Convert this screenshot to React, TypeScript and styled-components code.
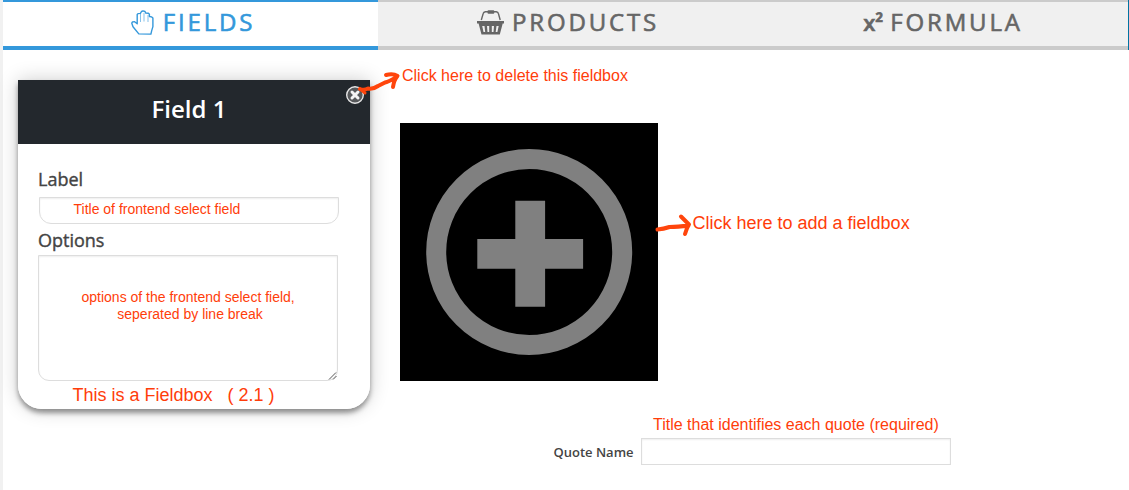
import React from 'react';
import styled, { createGlobalStyle } from 'styled-components';

const GlobalStyle = createGlobalStyle`
  * { box-sizing: border-box; }
  html, body { margin: 0; background: #fff; }
  body { font-family: 'Open Sans', sans-serif; color: #444; overflow: hidden; }
`;

const Page = styled.div`
  position: relative;
  width: 1129px;
  height: 490px;
  border-left: 3px solid #f1f1f1;
  background: #fff;
  display: flex;
  flex-direction: column;
`;

const TabBar = styled.nav`
  display: flex;
  height: 50px;
  border-right: 1px solid #0074a2;
`;

const Tab = styled.div<{ $active?: boolean }>`
  width: 375px;
  display: flex;
  justify-content: center;
  padding-left: 5px;
  border-top: 2px solid ${p => (p.$active ? '#3498db' : '#cbcbcb')};
  border-bottom: 4px solid ${p => (p.$active ? '#3498db' : '#cbcbcb')};
  background: ${p => (p.$active ? '#fff' : '#f0f0f0')};
  color: ${p => (p.$active ? '#3498db' : '#666')};
  font-size: 24px;
  line-height: 40px;
  letter-spacing: 2.85px;
  -webkit-text-stroke: 0.6px currentColor;
`;

const TabIcon = styled.svg`
  display: block;
  flex: none;
  margin-top: 8px;
  margin-right: 8px;
  overflow: visible;
`;

const Power = styled.span`
  font-size: 22px;
  font-weight: 600;
  letter-spacing: 0;
  margin-right: 7px;
`;

const Main = styled.main`
  display: flex;
  align-items: flex-start;
  padding: 30px 0 0 15px;
`;

const FieldBox = styled.section`
  width: 352px;
  height: 329px;
  border-radius: 0 0 24px 24px;
  overflow: hidden;
  background: #fff;
`;

const Shadow = styled.div`
  border-radius: 0 0 24px 24px;
  box-shadow: 0 4px 5px rgba(0, 0, 0, 0.38), 0 0 20px rgba(0, 0, 0, 0.2);
`;

const FieldHeader = styled.header`
  position: relative;
  height: 64px;
  background: #23282d;
  color: #fff;
  text-align: center;
  font-size: 24px;
  font-weight: 600;
  line-height: 57px;
  padding-right: 10px;
`;

const CloseIcon = styled.svg`
  position: absolute;
  right: 5px;
  top: 5px;
`;

const FieldBody = styled.div`
  display: flex;
  flex-direction: column;
  padding: 22px 20px 0;
`;

const FieldLabel = styled.label`
  font-size: 18px;
  line-height: 26px;
  -webkit-text-stroke: 0.4px currentColor;
`;

const TextInput = styled.input`
  width: 300px;
  height: 27px;
  margin: 5px 0 3px 1px;
  border: 1px solid #ddd;
  border-radius: 0 0 12px 12px;
  box-shadow: inset 0 1px 2px rgba(0, 0, 0, 0.07);
  outline: none;
`;

const OptionsArea = styled.textarea`
  width: 300px;
  height: 126px;
  margin: 2px 0 0;
  border: 1px solid #ddd;
  border-radius: 0 0 11px 11px;
  box-shadow: inset 0 1px 2px rgba(0, 0, 0, 0.07);
  resize: none;
  outline: none;
`;

const AddBox = styled.button`
  width: 258px;
  height: 258px;
  margin: 43px 0 0 30px;
  padding: 0;
  border: 0;
  background: #000;
`;

const QuoteRow = styled.div`
  display: flex;
  align-items: center;
  margin: 29px 0 0 550.5px;
`;

const QuoteLabel = styled.label`
  width: 87.5px;
  font-size: 13px;
  font-weight: 600;
  line-height: 18px;
`;

const QuoteInput = styled.input`
  width: 310px;
  height: 27px;
  border: 1px solid #ddd;
  box-shadow: inset 0 1px 2px rgba(0, 0, 0, 0.07);
  outline: none;
`;

const Note = styled.span<{ $x: number; $y: number; $size: number }>`
  position: absolute;
  left: ${p => p.$x - 3}px;
  top: ${p => p.$y}px;
  font-family: 'Liberation Sans', Arial, sans-serif;
  font-size: ${p => p.$size}px;
  line-height: 17px;
  color: #ff3d0a;
  white-space: pre;
  text-align: center;
`;

const Pen = styled.svg<{ $x: number; $y: number }>`
  position: absolute;
  left: ${p => p.$x - 3}px;
  top: ${p => p.$y}px;
  fill: none;
  stroke: #ff450c;
  stroke-width: 4;
  stroke-linecap: round;
  stroke-linejoin: round;
`;

const Grip = styled.svg`
  position: absolute;
  left: 325px;
  top: 371px;
`;

export default function App() {
  return (
    <>
      <GlobalStyle />
      <Page>
        <TabBar>
          <Tab $active>
            <TabIcon width="24" height="25" viewBox="0 0 24 25" fill="none" stroke="currentColor" strokeWidth="1.4" strokeLinejoin="round">
              <path d="M7.800 23.900 2 16.800.8 13.200 1.500 11.900 3.600 11.700 6.200 13.800V4.500L7 3.600l2.400-.2L10.500 1.500 12 .9l2 .6.8 1.600 2.600.2 1 1v2.200l2.300.4 1.200 1.200v8.500l-1.200 4-.8 3.500z" />
              <path d="M9.500 4v8M13 3v8.500M17 5v7" strokeWidth=".6" />
            </TabIcon>
            <span>FIELDS</span>
          </Tab>
          <Tab>
            <TabIcon width="27" height="25" viewBox="0 0 27 25" fill="currentColor">
              <path d="M4.300 10 6.200 3.500Q6.600 1.900 8.300 1.700H19.300Q21 1.900 21.400 3.500L23.200 10" fill="none" stroke="currentColor" strokeWidth="1.400" />
              <rect x="10.500" y=".2" width="6.800" height="3.500" rx="1" />
              <path fillRule="evenodd" d="M0 11h27v2.500h-1.300L22.800 24.500H4.500L1.600 13.500H0zM5.200 16l1.300 6h1.700l-.7-6zM10 16l.5 6h1.700v-6zM14.800 16v6h1.700l.5-6zM19.500 16l-.8 6h1.700l1.300-6z" />
            </TabIcon>
            <span>PRODUCTS</span>
          </Tab>
          <Tab>
            <Power>x²</Power>
            <span>FORMULA</span>
          </Tab>
        </TabBar>

        <Main>
          <Shadow>
            <FieldBox>
              <FieldHeader>
                Field 1
                <CloseIcon width="20" height="20" viewBox="0 0 20 20">
                  <circle cx="10" cy="10" r="8.3" fill="#57595b" stroke="#e5e5e5" strokeWidth="1.400" />
                  <path d="m7 7 6 6m0-6-6 6" stroke="#f4f4f4" strokeWidth="3" strokeLinecap="round" />
                </CloseIcon>
              </FieldHeader>
              <FieldBody>
                <FieldLabel>Label</FieldLabel>
                <TextInput />
                <FieldLabel>Options</FieldLabel>
                <OptionsArea />
              </FieldBody>
            </FieldBox>
          </Shadow>
          <AddBox>
            <svg width="258" height="258" viewBox="0 0 258 258" display="block">
              <circle cx="129.2" cy="129" r="93" fill="none" stroke="#808080" strokeWidth="20" />
              <path d="M115.3 77.800h29.800v38.300h38v29.700h-38v38h-29.800v-38h-38v-29.700h38z" fill="#808080" />
            </svg>
          </AddBox>
        </Main>

        <QuoteRow>
          <QuoteLabel>Quote Name</QuoteLabel>
          <QuoteInput />
        </QuoteRow>

        <Grip width="12" height="10" viewBox="0 0 12 10" stroke="#555" strokeWidth="1">
          <path d="M1 8.500 8 1.500M5 8.500 8.500 5" />
        </Grip>

        <Note $x={402} $y={67} $size={16}>Click here to delete this fieldbox</Note>
        <Note $x={692.5} $y={215} $size={18}>Click here to add a fieldbox</Note>
        <Note $x={73.5} $y={201} $size={14}>Title of frontend select field</Note>
        <Note $x={81.5} $y={289} $size={14}>{'options of the frontend select field,\n seperated by line break'}</Note>
        <Note $x={72.5} $y={387} $size={18}>{'This is a Fieldbox   ( 2.1 )'}</Note>
        <Note $x={653} $y={416} $size={16}>Title that identifies each quote (required)</Note>

        <Pen $x={350} $y={65} width="60" height="35">
          <path d="M10 24q4 1.500 8-.5 5 1 10-2.500l7-3.500q4-1 11-5M36 10q7-2 11.500 1-3.500 4-4.500 11" />
          <path d="m10 24 5 4" strokeWidth="3" />
        </Pen>
        <Pen $x={650} $y={208} width="50" height="35">
          <path d="M7.500 21.500q6-.5 12-2.500 8 0 19-1.500M31 8.500q3 3 8 8-2 3-4 9.500" />
        </Pen>
      </Page>
    </>
  );
}
